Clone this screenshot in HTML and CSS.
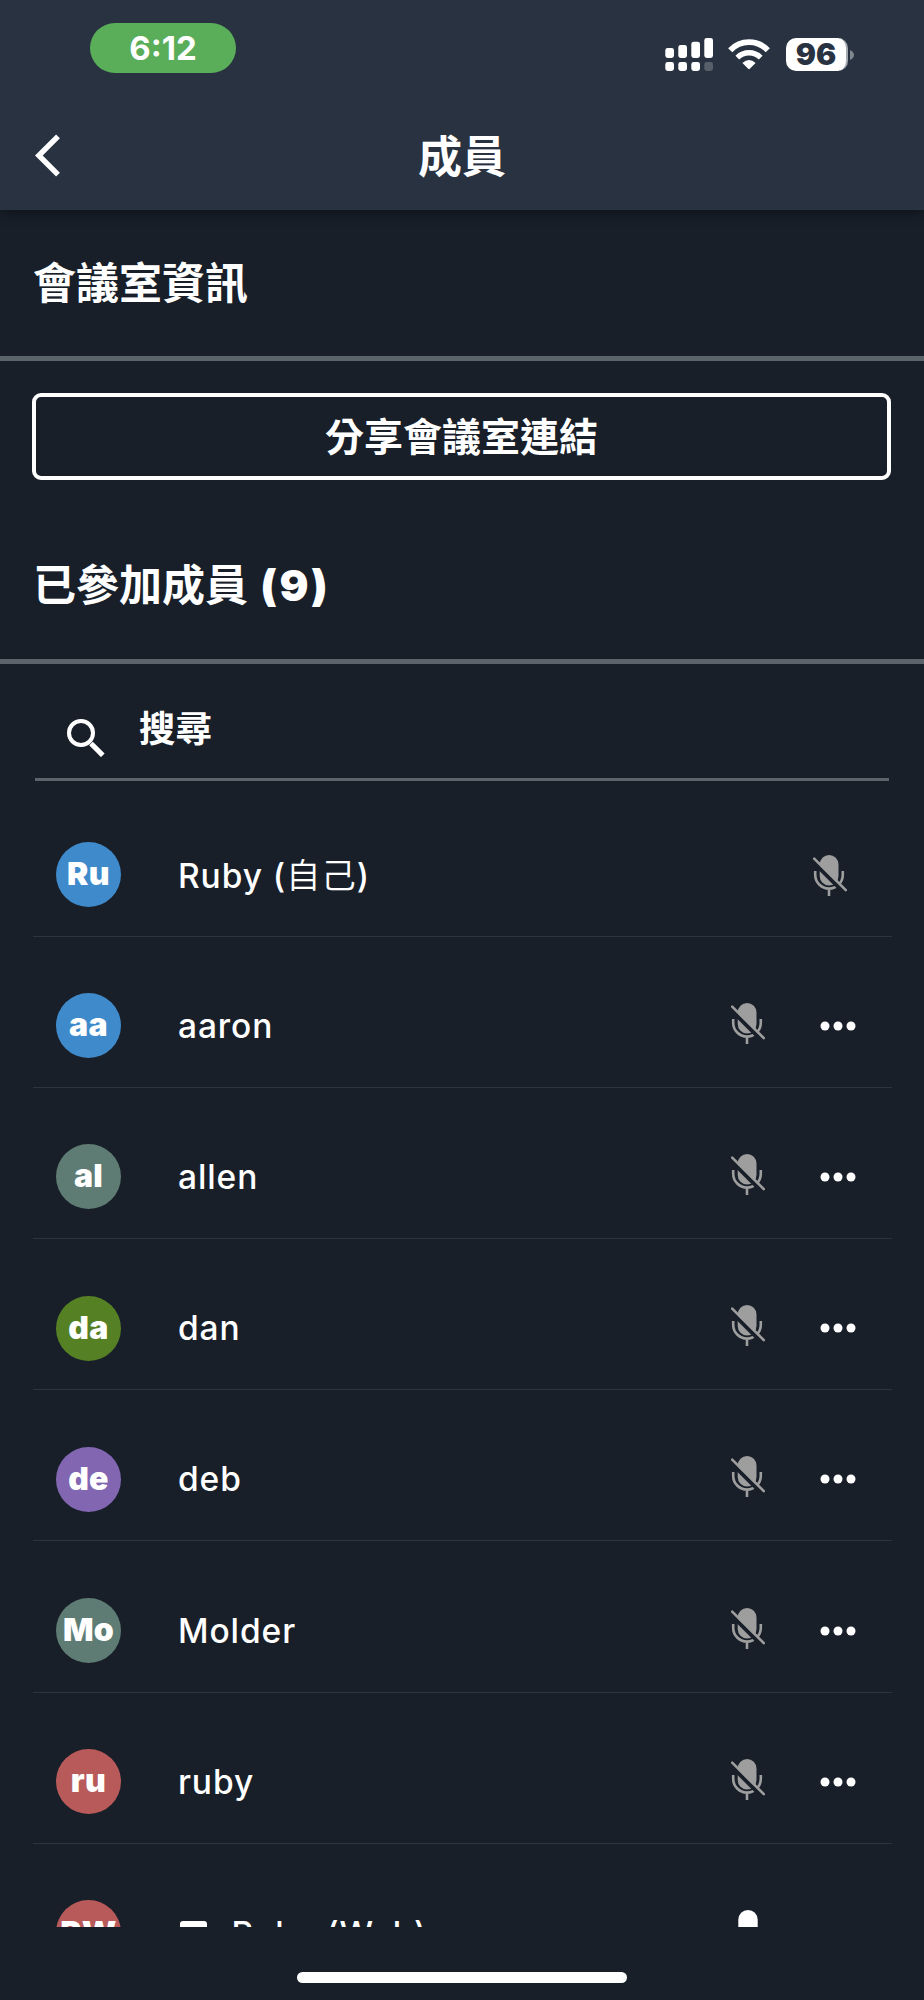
FILE: index.html
```html
<!DOCTYPE html>
<html lang="zh-Hant">

<head>
    <meta charset="UTF-8">
    <meta name="viewport" content="width=device-width, initial-scale=1.0">
    <title>成員</title>
    <link rel="stylesheet" href="styles.css">
</head>

<body>
    <svg class="symbols" width="0" height="0">
        <symbol id="mic-off" viewBox="0 0 34 41">
            <rect x="6.7" y="0" width="18.8" height="30.5" rx="9.4" fill="#9e9e9e" />
            <path d="M2.2 16v3.7a13.8 13.8 0 0 0 27.6 0V16M16 33.5V41" fill="none" stroke="#9e9e9e" stroke-width="2.6" />
            <path d="M-2 4.6L30 36.6" stroke="#181f29" stroke-width="4.2" />
            <path d="M1.2 3.6L32.8 35.2" stroke="#9e9e9e" stroke-width="2.6" stroke-linecap="round" />
        </symbol>
        <symbol id="mic-on" viewBox="0 0 34 41">
            <rect x="7.3" y="0" width="19.4" height="30.5" rx="9.7" fill="#fff" />
            <path d="M3.2 17v3.7a13.8 13.8 0 0 0 27.6 0V17M17 34.5V41" fill="none" stroke="#fff" stroke-width="2.6" />
        </symbol>
        <symbol id="dots" viewBox="0 0 36 10">
            <circle cx="5" cy="5" r="4.5" />
            <circle cx="18" cy="5" r="4.5" />
            <circle cx="31" cy="5" r="4.5" />
        </symbol>
    </svg>

    <header class="header">
        <div class="status-bar">
            <span class="time">6:12</span>
            <div class="status-icons">
                <svg class="signal" viewBox="0 0 48 33" fill="#fff">
                    <rect x="0.3" y="10" width="8.7" height="10" rx="2.4" />
                    <rect x="13.3" y="7" width="8.7" height="13" rx="2.4" />
                    <rect x="26.3" y="3.7" width="8.7" height="16.3" rx="2.4" />
                    <rect x="39.3" y="0" width="8.7" height="20" rx="2.4" />
                    <rect x="0.3" y="24" width="8.7" height="9" rx="2.4" />
                    <rect x="13.3" y="24" width="8.7" height="9" rx="2.4" />
                    <rect x="26.3" y="24" width="8.7" height="9" rx="2.4" />
                    <rect x="39.3" y="24" width="8.7" height="9" rx="2.4" opacity="0.22" />
                </svg>
                <svg class="wifi" viewBox="0 0 42 31" fill="none" stroke="#fff">
                    <path d="M2.2 11.2Q10 3.1 21 3.1T39.8 11.2" stroke-width="5.8" />
                    <path d="M9.3 18.6Q14.3 13.8 21 13.8T32.7 18.6" stroke-width="5.4" />
                    <path d="M14.4 23.9Q21 18.3 27.6 23.9L21.8 29.8Q21 30.5 20.2 29.8z" fill="#fff" stroke="none" />
                </svg>
                <div class="battery">
                    <span class="battery-level">96</span>
                    <svg class="battery-tip" viewBox="0 0 4 10"><path d="M0 0Q4 1.8 4 5T0 10z" fill="#7f868e" /></svg>
                </div>
            </div>
        </div>
        <div class="nav-bar">
            <svg class="back" viewBox="0 0 26 44"><path d="M23 2.3L3.8 21.5L23 40.7" fill="none" stroke="#fff" stroke-width="5.4" /></svg>
            <h1>成員</h1>
        </div>
    </header>

    <main class="content">
        <h2 class="section-title">會議室資訊</h2>
        <button class="share-btn">分享會議室連結</button>
        <h2 class="section-title joined">已參加成員 <span class="count">(9)</span></h2>

        <div class="search">
            <svg class="search-icon" viewBox="0 0 38 38" fill="none" stroke="#fff">
                <circle cx="14" cy="14" r="12" stroke-width="4" />
                <path d="M24 24.5L35.8 36.3" stroke-width="5.2" />
            </svg>
            <span>搜尋</span>
        </div>

        <ul class="members">
            <li class="member self">
                <span class="avatar blue">Ru</span>
                <span class="name">Ruby (<span class="cjk">自己</span>)</span>
                <svg class="mic"><use href="#mic-off" /></svg>
            </li>
            <li class="member">
                <span class="avatar blue">aa</span>
                <span class="name">aaron</span>
                <svg class="mic"><use href="#mic-off" /></svg>
                <svg class="more"><use href="#dots" /></svg>
            </li>
            <li class="member">
                <span class="avatar teal">al</span>
                <span class="name">allen</span>
                <svg class="mic"><use href="#mic-off" /></svg>
                <svg class="more"><use href="#dots" /></svg>
            </li>
            <li class="member">
                <span class="avatar green">da</span>
                <span class="name">dan</span>
                <svg class="mic"><use href="#mic-off" /></svg>
                <svg class="more"><use href="#dots" /></svg>
            </li>
            <li class="member">
                <span class="avatar purple">de</span>
                <span class="name">deb</span>
                <svg class="mic"><use href="#mic-off" /></svg>
                <svg class="more"><use href="#dots" /></svg>
            </li>
            <li class="member">
                <span class="avatar teal">Mo</span>
                <span class="name">Molder</span>
                <svg class="mic"><use href="#mic-off" /></svg>
                <svg class="more"><use href="#dots" /></svg>
            </li>
            <li class="member">
                <span class="avatar red">ru</span>
                <span class="name">ruby</span>
                <svg class="mic"><use href="#mic-off" /></svg>
                <svg class="more"><use href="#dots" /></svg>
            </li>
            <li class="member web">
                <span class="avatar red">RW</span>
                <svg class="device" viewBox="0 0 27 24"><rect width="27" height="20" rx="3" fill="#fff" /><path d="M8 22h11" stroke="#fff" stroke-width="3" /></svg>
                <span class="name">Ruby (Web)</span>
                <svg class="mic"><use href="#mic-on" /></svg>
            </li>
        </ul>
    </main>

    <footer class="home-indicator"><span></span></footer>
</body>

</html>
```
FILE: styles.css
```css
* {
    box-sizing: border-box;
}

body {
    margin: 0;
    height: 2000px;
    display: flex;
    flex-direction: column;
    overflow: hidden;
    background-color: #181f29;
    color: white;
    font-family: Inter, "Noto Sans CJK TC", sans-serif;
}

svg {
    display: block;
    flex: none;
}

.symbols {
    position: absolute;
}

.header {
    flex: none;
    height: 210px;
    background-color: #283240;
    box-shadow: 0 2px 12px rgba(0, 0, 0, 0.45);
    z-index: 1;
}

.status-bar {
    display: flex;
    justify-content: space-between;
    align-items: flex-start;
    padding: 23px 70px 0 90px;
    height: 102px;
}

.time {
    width: 146px;
    height: 50px;
    border-radius: 25px;
    background-color: #5aae5a;
    font-size: 33px;
    font-weight: 700;
    line-height: 51px;
    text-align: center;
}

.status-icons {
    display: flex;
    padding-top: 15px;
}

.signal {
    width: 48px;
    height: 33px;
}

.wifi {
    width: 42px;
    height: 31px;
    margin: 1px 16px 0 15px;
}

.battery {
    display: flex;
    align-items: center;
    gap: 2px;
}

.battery-level {
    width: 62px;
    height: 33px;
    border-radius: 10px;
    border-right: 2px solid #a5aab0;
    background-color: white;
    color: #283240;
    font-size: 30px;
    font-weight: 900;
    line-height: 33px;
    text-align: center;
}

.battery-tip {
    width: 4px;
    height: 10px;
}

.nav-bar {
    display: flex;
    align-items: center;
    height: 108px;
    padding: 0 35px;
}

.back {
    width: 26px;
    height: 44px;
}

.nav-bar h1 {
    flex: 1;
    margin: 2px 26px 0 0;
    font-size: 44px;
    font-weight: 600;
    line-height: 60px;
    text-align: center;
}

.content {
    flex: none;
    height: 1716.5px;
    overflow: hidden;
}

.section-title {
    margin: 0;
    height: 151px;
    padding: 0 33px;
    border-bottom: 5px solid #5b636b;
    font-size: 43px;
    font-weight: 700;
    line-height: 146px;
}

.section-title.joined {
    height: 153px;
    line-height: 149px;
}

.count {
    font-weight: 900;
    letter-spacing: 2.6px;
    margin-left: 2px;
}

.share-btn {
    display: block;
    width: 859px;
    height: 87px;
    margin: 32px 0 31px 32px;
    padding: 0 0 5px;
    border: 4.5px solid white;
    border-radius: 9px;
    background: none;
    color: white;
    font-family: inherit;
    font-size: 39px;
    font-weight: 700;
}

.search {
    display: flex;
    height: 117px;
    margin: 0 35px;
    padding-left: 32px;
    border-bottom: 3px solid #5b636b;
    font-size: 36.5px;
    font-weight: 700;
    line-height: 131px;
}

.search-icon {
    width: 38px;
    height: 38px;
    margin: 55px 34px 0 0;
}

.members {
    list-style: none;
    margin: 4.5px 32.5px 0;
    padding: 0;
}

.member {
    display: flex;
    align-items: center;
    height: 151.2px;
    padding: 28px 36px 0 23.5px;
    border-bottom: 1.5px solid #2c343e;
}

.avatar {
    width: 65px;
    height: 65px;
    border-radius: 50%;
    font-size: 32px;
    font-weight: 900;
    letter-spacing: 0.3px;
    line-height: 64px;
    text-align: center;
}

.blue { background-color: #3f8acb; }
.teal { background-color: #5e7c73; }
.green { background-color: #558024; }
.purple { background-color: #8266b2; }
.red { background-color: #b95a5a; }

.name {
    flex: 1;
    margin-left: 57px;
    font-size: 33.5px;
    font-weight: 540;
    letter-spacing: 0.9px;
    line-height: 66px;
}

.self .name {
    padding-top: 2px;
}

.cjk {
    font-size: 34.5px;
    font-weight: 350;
    line-height: 1;
}

.mic {
    width: 34px;
    height: 41px;
    margin: 0 55px 5px 0;
}

.more {
    width: 36px;
    height: 10px;
    fill: white;
}

.self .mic {
    margin: 1px 9px 0 0;
}

.device {
    width: 27px;
    height: 24px;
    margin: 0 24.5px 0 59px;
}

.web .name {
    margin-left: 0;
    padding-top: 3px;
}

.web .avatar {
    line-height: 66px;
}

.web .mic {
    margin-right: 91px;
}

.home-indicator {
    display: flex;
    justify-content: center;
    padding-top: 45px;
}

.home-indicator span {
    width: 330px;
    height: 11px;
    border-radius: 6px;
    background-color: white;
}
```
